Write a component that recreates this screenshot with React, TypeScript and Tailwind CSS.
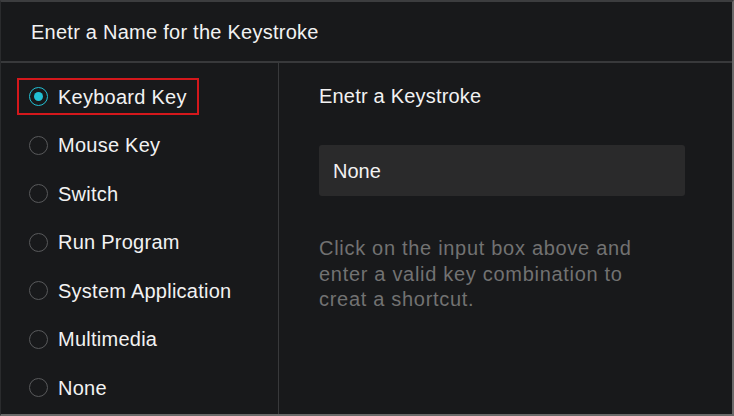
import { useState } from "react";

const options = [
  "Keyboard Key",
  "Mouse Key",
  "Switch",
  "Run Program",
  "System Application",
  "Multimedia",
  "None",
];

export default function App() {
  const [selected, setSelected] = useState("Keyboard Key");

  return (
    <div
      className="w-[734px] h-[416px] bg-[#18191b] border-t-2 border-b-2 border-r-2 border-l border-t-[#3c3d3f] border-b-[#6a6a6a] border-r-[#6a6a6a] border-l-[#2a2b2d] flex flex-col text-[#f2f2f2]"
      style={{ fontFamily: '"Liberation Sans", Arial, sans-serif' }}
    >
      {/* Header */}
      <div className="h-[61px] shrink-0 flex items-center pl-[30px] border-b-2 border-[#38393b] text-[20px] tracking-[0.25px]">
        Enetr a Name for the Keystroke
      </div>

      <div className="flex flex-1 min-h-0">
        {/* Type list */}
        <div className="w-[278px] shrink-0 border-r border-[#38393b] pt-[15px] flex flex-col gap-[11.5px]">
          {options.map((opt) => {
            const active = opt === selected;
            return (
              <button
                key={opt}
                onClick={() => setSelected(opt)}
                className={`ml-[16px] w-fit h-[37px] pl-[10px] pr-[10px] flex items-center gap-[10px] border-2 ${
                  active ? "border-[#d4181c]" : "border-transparent"
                }`}
              >
                <span
                  className={`w-[19px] h-[19px] rounded-full flex items-center justify-center border-[1.5px] ${
                    active ? "border-[#22c0d4]" : "border-[#58595b]"
                  }`}
                >
                  {active && <span className="w-[9px] h-[9px] rounded-full bg-[#22c0d4]" />}
                </span>
                <span className="text-[20px] leading-none tracking-[0.25px]">{opt}</span>
              </button>
            );
          })}
        </div>

        {/* Keystroke input */}
        <div className="flex-1 pl-[40px] pt-[21px]">
          <div className="text-[20px] leading-[24px] tracking-[0.2px]">Enetr a Keystroke</div>
          <div className="mt-[37px] w-[366px] h-[51px] rounded-[3px] bg-[#2a2a2b] flex items-center pl-[14px] text-[20px]">
            None
          </div>
          <p className="mt-[40px] w-[340px] text-[20px] leading-[25.5px] tracking-[0.7px] text-[#727272]">
            Click on the input box above and enter a valid key combination to creat a shortcut.
          </p>
        </div>
      </div>
    </div>
  );
}
